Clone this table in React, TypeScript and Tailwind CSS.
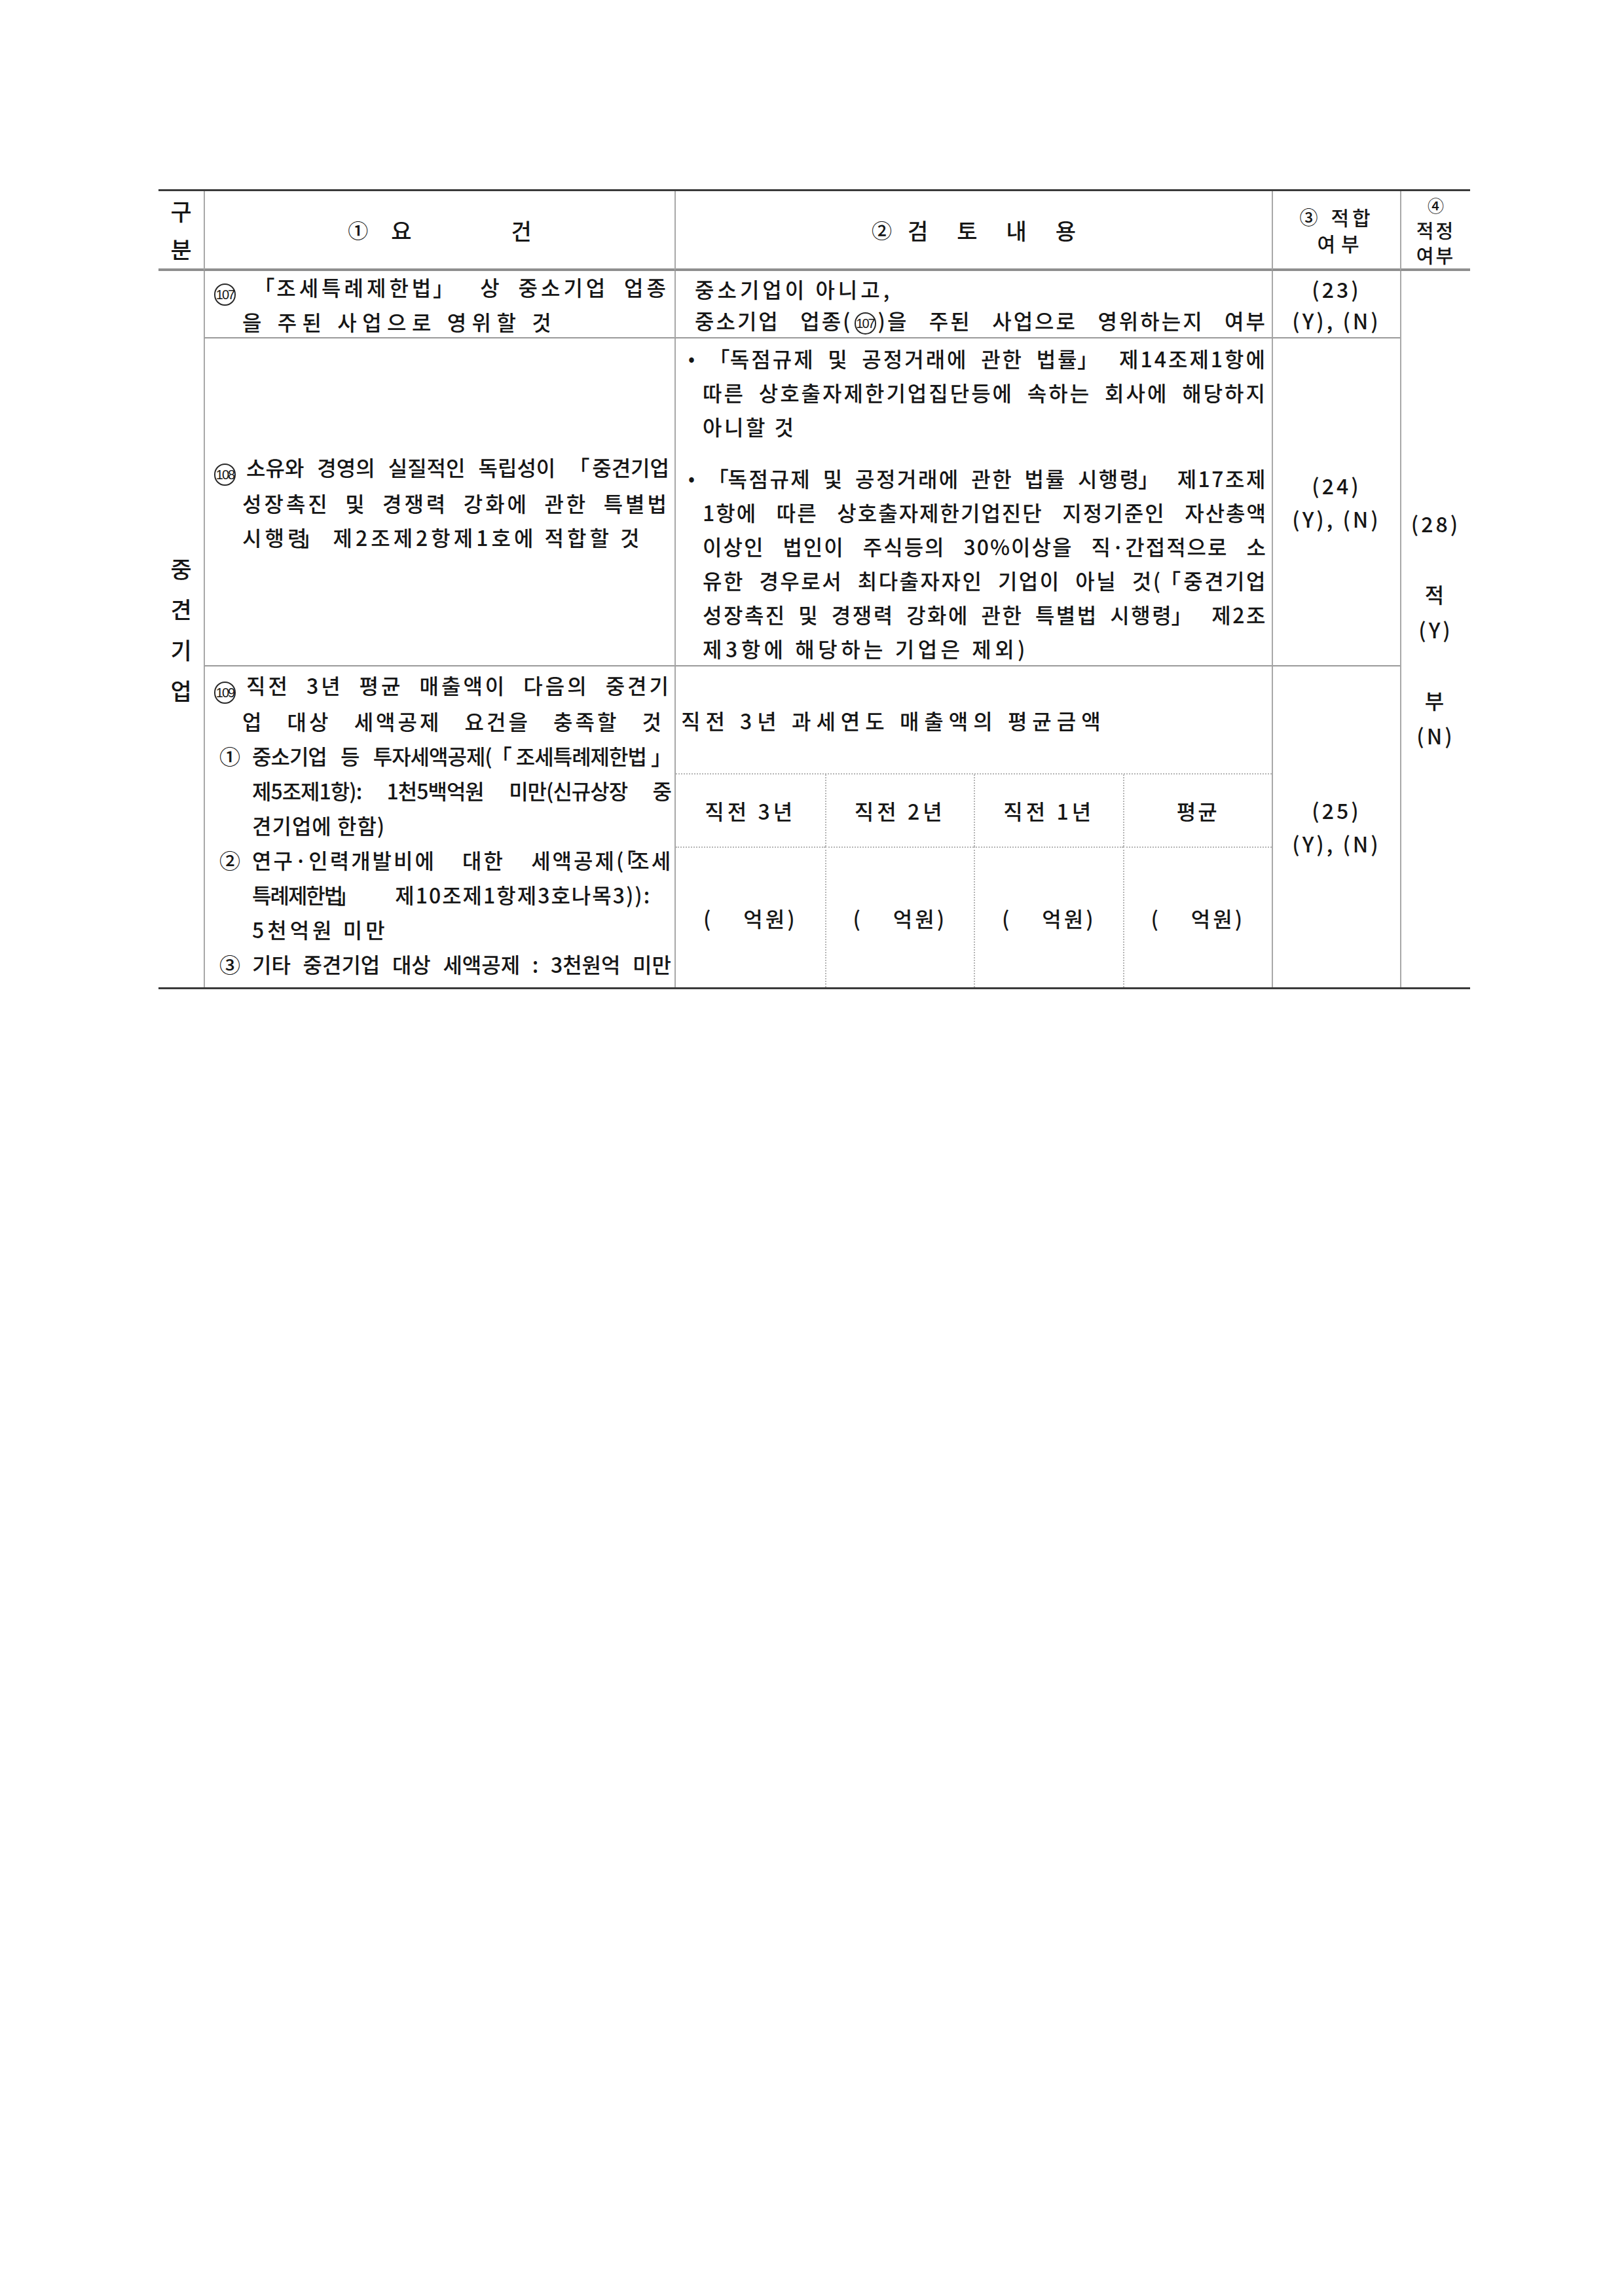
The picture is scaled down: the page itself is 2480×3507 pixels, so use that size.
import React from 'react';

const VL = 'border-l-[2px] border-l-[#a8a8a8]';
const HB = 'border-b-[4px] border-b-[#8f8f8f]';
const RB = 'border-b-[2px] border-b-[#9a9a9a]';

// circled numbers above 50 have no unicode glyph, so draw the ring around real text
function Circ({ n, tail = true }: { n: string; tail?: boolean }) {
  return (
    <span
      className={`${tail ? 'mr-[16px] align-[-5px]' : 'mx-[3px] align-middle'} inline-flex h-[34px] w-[33px] items-center justify-center rounded-full border-[2px] border-[#2a2a2a] font-['Liberation_Sans_Narrow','Liberation_Sans',sans-serif] text-[20px] font-normal leading-none tracking-[-2px]`}
    >
      {n}
    </span>
  );
}

// corner brackets sit tight against the quoted words: shrink the advance instead of overlapping boxes
const O = () => <span className="tracking-[-9px]">「</span>;
function Cl({ c }: { c: string }) {
  return (
    <>
      <span className="tracking-[-9px]">{c}</span>」
    </>
  );
}

function Num({ c }: { c: string }) {
  return <span className="inline-block w-[50px] tracking-normal">{c}</span>;
}

function Ln({ children, j, className = '' }: { children: React.ReactNode; j?: boolean; className?: string }) {
  return (
    <div className={`${j ? '[text-align-last:justify] text-justify' : 'whitespace-nowrap'} ${className}`}>
      {children}
    </div>
  );
}

function Bullet() {
  return <span className="-ml-[22px] inline-block w-[22px] align-[3px] text-[28px] tracking-normal">•</span>;
}

function Fit({ no, leading }: { no: string; leading: string }) {
  return (
    <div className={`flex flex-col items-center justify-center tracking-[4px] ${leading}`}>
      <span>({no})</span>
      <span>(Y), (N)</span>
    </div>
  );
}

export default function App() {
  return (
    <div className="min-h-[3507px] w-[2480px] bg-white pt-[289px] font-['Noto_Sans_CJK_KR','Noto_Sans',sans-serif] text-[32px] font-medium text-[#161616]">
      <div className="ml-[242px] grid w-[2003px] grid-cols-[69px_719px_912px_196px_107px] grid-rows-[122px_103px_501px_490px] border-t-[3px] border-b-[3px] border-[#3a3a3a]">
        {/* header */}
        <div className={`col-start-1 row-start-1 flex flex-col items-center justify-center text-[35px] leading-[58px] ${HB}`}>
          <span>구</span>
          <span>분</span>
        </div>
        <div className={`col-start-2 row-start-1 flex items-center justify-center text-[34px] ${VL} ${HB}`}>
          <span className="text-[31px]">①</span>
          <span className="ml-[35px]">요</span>
          <span className="ml-[152px]">건</span>
        </div>
        <div className={`col-start-3 row-start-1 flex items-center justify-center text-[34px] ${VL} ${HB}`}>
          <span className="text-[31px]">②</span>
          <span className="ml-[24px]">검</span>
          <span className="ml-[44px]">토</span>
          <span className="ml-[44px]">내</span>
          <span className="ml-[44px]">용</span>
        </div>
        <div className={`col-start-4 row-start-1 flex flex-col items-center justify-center text-[30px] leading-[40px] ${VL} ${HB}`}>
          <div className="flex items-center">
            <span className="text-[28px]">③</span>
            <span className="ml-[20px] tracking-[5px]">적합</span>
          </div>
          <div className="pl-[14px] tracking-[9px]">여부</div>
        </div>
        <div className={`col-start-5 row-start-1 flex flex-col items-center justify-center text-[29px] leading-[38px] ${VL} ${HB}`}>
          <span className="text-[25px]">④</span>
          <span className="tracking-[3px]">적정</span>
          <span className="tracking-[3px]">여부</span>
        </div>

        {/* 구분 */}
        <div className="col-start-1 row-start-2 row-span-3 flex flex-col items-center justify-center text-[35px] leading-[62px]">
          <span>중</span>
          <span>견</span>
          <span>기</span>
          <span>업</span>
        </div>

        {/* 107 */}
        <div className={`col-start-2 row-start-2 flex flex-col justify-center pl-[14px] pr-[8px] leading-[48px] ${VL} ${RB}`}>
          <Ln j className="tracking-[5px]">
            <Circ n="107" />
            <O />조세특례제한<Cl c="법" /> 상 중소기업 업종
          </Ln>
          <Ln className="pl-[43px] tracking-[8.5px]">을 주된 사업으로 영위할 것</Ln>
        </div>
        <div className={`col-start-3 row-start-2 flex flex-col justify-center pl-[29px] pr-[7px] leading-[48px] ${VL} ${RB}`}>
          <Ln className="tracking-[5px]">중소기업이 아니고,</Ln>
          <Ln j className="tracking-[3px]">
            중소기업 업종(<Circ n="107" tail={false} />)을 주된 사업으로 영위하는지 여부
          </Ln>
        </div>
        <div className={`col-start-4 row-start-2 flex justify-center ${VL} ${RB}`}>
          <Fit no="23" leading="leading-[48px]" />
        </div>

        {/* 적정여부 */}
        <div className={`col-start-5 row-start-2 row-span-3 flex flex-col items-center justify-center leading-[54px] tracking-[4px] ${VL}`}>
          <span>(28)</span>
          <div className="h-[54px]" />
          <span>적</span>
          <span>(Y)</span>
          <div className="h-[54px]" />
          <span>부</span>
          <span>(N)</span>
        </div>

        {/* 108 */}
        <div className={`col-start-2 row-start-3 flex flex-col justify-center pl-[14px] pr-[8px] leading-[52px] ${VL} ${RB}`}>
          <Ln j>
            <Circ n="108" />소유와 경영의 실질적인 독립성이 <O />중견기업
          </Ln>
          <Ln j className="pl-[43px] tracking-[4px]">성장촉진 및 경쟁력 강화에 관한 특별법</Ln>
          <Ln className="pl-[43px] tracking-[5px]">
            시행<Cl c="령" /> 제2조제2항제1호에 적합할 것
          </Ln>
        </div>
        <div className={`col-start-3 row-start-3 flex flex-col pt-[3px] pl-[41px] pr-[7px] leading-[52px] ${VL} ${RB}`}>
          <Ln j className="tracking-[3px]">
            <Bullet />
            <O />독점규제 및 공정거래에 관한 법<Cl c="률" /> 제14조제1항에
          </Ln>
          <Ln j className="tracking-[3px]">따른 상호출자제한기업집단등에 속하는 회사에 해당하지</Ln>
          <Ln className="tracking-[3.5px]">아니할 것</Ln>
          <div className="h-[26px]" />
          <Ln j className="tracking-[2.5px]">
            <Bullet />
            <O />독점규제 및 공정거래에 관한 법률 시행<Cl c="령" /> 제17조제
          </Ln>
          <Ln j className="tracking-[2px]">1항에 따른 상호출자제한기업진단 지정기준인 자산총액</Ln>
          <Ln j className="tracking-[2px]">이상인 법인이 주식등의 30%이상을 직·간접적으로 소</Ln>
          <Ln j className="tracking-[2.5px]">
            유한 경우로서 최다출자자인 기업이 아닐 것(<O />중견기업
          </Ln>
          <Ln j className="tracking-[2.5px]">
            성장촉진 및 경쟁력 강화에 관한 특별법 시행<Cl c="령" /> 제2조
          </Ln>
          <Ln className="tracking-[5.5px]">제3항에 해당하는 기업은 제외)</Ln>
        </div>
        <div className={`col-start-4 row-start-3 flex justify-center ${VL} ${RB}`}>
          <Fit no="24" leading="leading-[51px]" />
        </div>

        {/* 109 */}
        <div className={`col-start-2 row-start-4 flex flex-col pt-[2px] pl-[14px] pr-[5px] leading-[53px] ${VL}`}>
          <Ln j className="tracking-[4px]">
            <Circ n="109" />직전 3년 평균 매출액이 다음의 중견기
          </Ln>
          <Ln j className="pl-[43px] pr-[11px] tracking-[4px]">업 대상 세액공제 요건을 충족할 것</Ln>
          <Ln j className="pl-[8px] tracking-[-1px]">
            <Num c="①" />중소기업 등 투자세액공제(<O />조세특례제한<Cl c="법" />
          </Ln>
          <Ln j className="pl-[58px] tracking-[-1px]">제5조제1항): 1천5백억원 미만(신규상장 중</Ln>
          <Ln className="pl-[58px] tracking-[1px]">견기업에 한함)</Ln>
          <Ln className="pl-[8px] tracking-[3px] [word-spacing:30px]">
            <Num c="②" />연구·인력개발비에 대한 세액공제(<O />조세
          </Ln>
          <Ln className="pl-[58px]">
            <span className="tracking-[-2px]">
              특례제한<Cl c="법" />
            </span>
            <span className="ml-[58px] tracking-[2px]">제10조제1항제3호나목3)):</span>
          </Ln>
          <Ln className="pl-[58px] tracking-[5px]">5천억원 미만</Ln>
          <Ln j className="pl-[8px]">
            <Num c="③" />기타 중견기업 대상 세액공제 : 3천원억 미만
          </Ln>
        </div>
        <div className={`col-start-3 row-start-4 flex flex-col ${VL}`}>
          <div className="flex h-[163px] items-center pl-[8px] tracking-[8px]">직전 3년 과세연도 매출액의 평균금액</div>
          <div className="grid flex-1 grid-cols-4 grid-rows-[110px_1fr] border-t-[2px] border-dotted border-[#b5b5b5]">
            <div className="flex items-center justify-center tracking-[5px]">직전 3년</div>
            <div className="flex items-center justify-center border-l-[2px] border-dotted border-[#b5b5b5] tracking-[5px]">직전 2년</div>
            <div className="flex items-center justify-center border-l-[2px] border-dotted border-[#b5b5b5] tracking-[5px]">직전 1년</div>
            <div className="flex items-center justify-center border-l-[2px] border-dotted border-[#b5b5b5] tracking-[3px]">평균</div>
            {['a', 'b', 'c', 'd'].map((k, i) => (
              <div
                key={k}
                className={`flex items-center justify-center border-t-[2px] border-dotted border-[#b5b5b5] ${i > 0 ? 'border-l-[2px]' : ''}`}
              >
                <span>(</span>
                <span className="ml-[50px] tracking-[4px]">억원)</span>
              </div>
            ))}
          </div>
        </div>
        <div className={`col-start-4 row-start-4 flex justify-center ${VL}`}>
          <Fit no="25" leading="leading-[51px]" />
        </div>
      </div>
    </div>
  );
}
